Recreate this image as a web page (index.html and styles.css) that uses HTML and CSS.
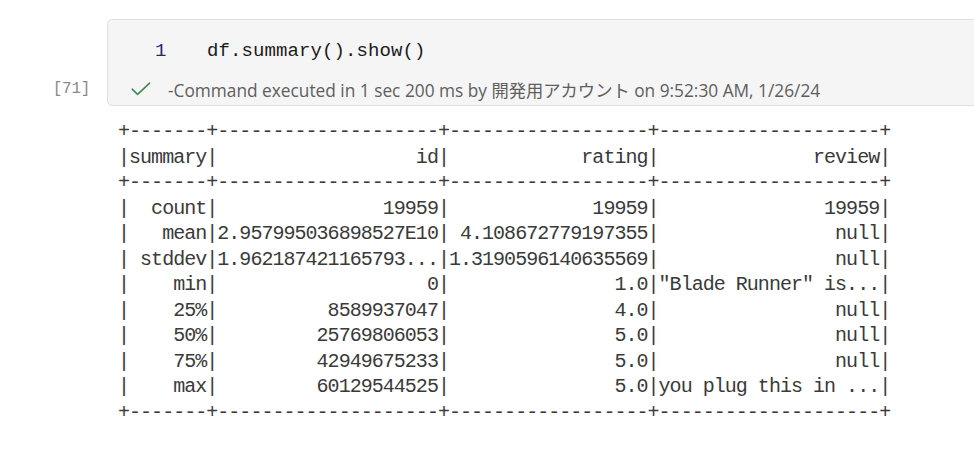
FILE: index.html
```html
<!DOCTYPE html>
<html lang="ja">
<head>
<meta charset="utf-8">
<title>df.summary().show()</title>
<link rel="stylesheet" href="styles.css">
</head>
<body>
<div class="cell">
  <div class="gutter"><span class="exec-count">[71]</span></div>
  <div class="cell-box">
    <div class="code-row">
      <span class="line-no">1</span>
      <span class="code">df.summary().show()</span>
    </div>
    <div class="status-row">
      <svg class="check" width="20" height="14" viewBox="0 0 20 14" aria-hidden="true">
        <path d="M1.2 7.2 L6.6 12.4 L18.6 1.2" fill="none" stroke="#3d8b4f" stroke-width="1.6" stroke-linecap="round" stroke-linejoin="round"/>
      </svg>
      <span class="status-text">-Command executed in 1 sec 200 ms by 開発用アカウント on 9:52:30 AM, 1/26/24</span>
    </div>
  </div>
</div>
<pre class="output">+-------+--------------------+------------------+--------------------+
|summary|                  id|            rating|              review|
+-------+--------------------+------------------+--------------------+
|  count|               19959|             19959|               19959|
|   mean|2.957995036898527E10| 4.108672779197355|                null|
| stddev|1.962187421165793...|1.3190596140635569|                null|
|    min|                   0|               1.0|"Blade Runner" is...|
|    25%|          8589937047|               4.0|                null|
|    50%|         25769806053|               5.0|                null|
|    75%|         42949675233|               5.0|                null|
|    max|         60129544525|               5.0|you plug this in ...|
+-------+--------------------+------------------+--------------------+
</pre>
</body>
</html>
```

FILE: styles.css
```css
html, body {
  margin: 0;
  padding: 0;
  background: #ffffff;
  overflow: hidden;
}

body {
  width: 974px;
  height: 463px;
  font-family: "Open Sans", "Noto Sans CJK JP", sans-serif;
}

.cell {
  display: flex;
  align-items: stretch;
  padding-top: 19px;
  width: 1000px;
}

.gutter {
  width: 107px;
  flex: 0 0 107px;
  display: flex;
  flex-direction: column;
  justify-content: flex-end;
  align-items: flex-end;
  padding-right: 17px;
  padding-bottom: 5px;
  box-sizing: border-box;
}

.exec-count {
  font-family: "Liberation Mono", monospace;
  font-size: 16px;
  line-height: 24px;
  color: #8a8a8a;
  letter-spacing: -0.3px;
}

.cell-box {
  flex: 1;
  background: #f5f5f5;
  border: 1px solid #e0e0e0;
  border-radius: 5px;
  padding: 18px 0 4px 0;
}

.code-row {
  display: flex;
  align-items: center;
  height: 26px;
  padding-left: 47px;
  font-family: "Liberation Mono", monospace;
  font-size: 19px;
}

.line-no {
  width: 52px;
  color: #1e2a78;
}

.code {
  color: #1a1a1a;
  letter-spacing: 0.1px;
}

.status-row {
  display: flex;
  align-items: center;
  height: 24px;
  margin-top: 13px;
  padding-left: 23px;
}

.check {
  display: block;
  margin-right: 17px;
}

.status-text {
  font-size: 17.3px;
  color: #5e5e5e;
  white-space: nowrap;
}

.output {
  margin: 13px 0 0 118px;
  font-family: "Liberation Mono", monospace;
  font-size: 20px;
  letter-spacing: -0.97px;
  line-height: 25.55px;
  color: #3a3a3a;
}
```
